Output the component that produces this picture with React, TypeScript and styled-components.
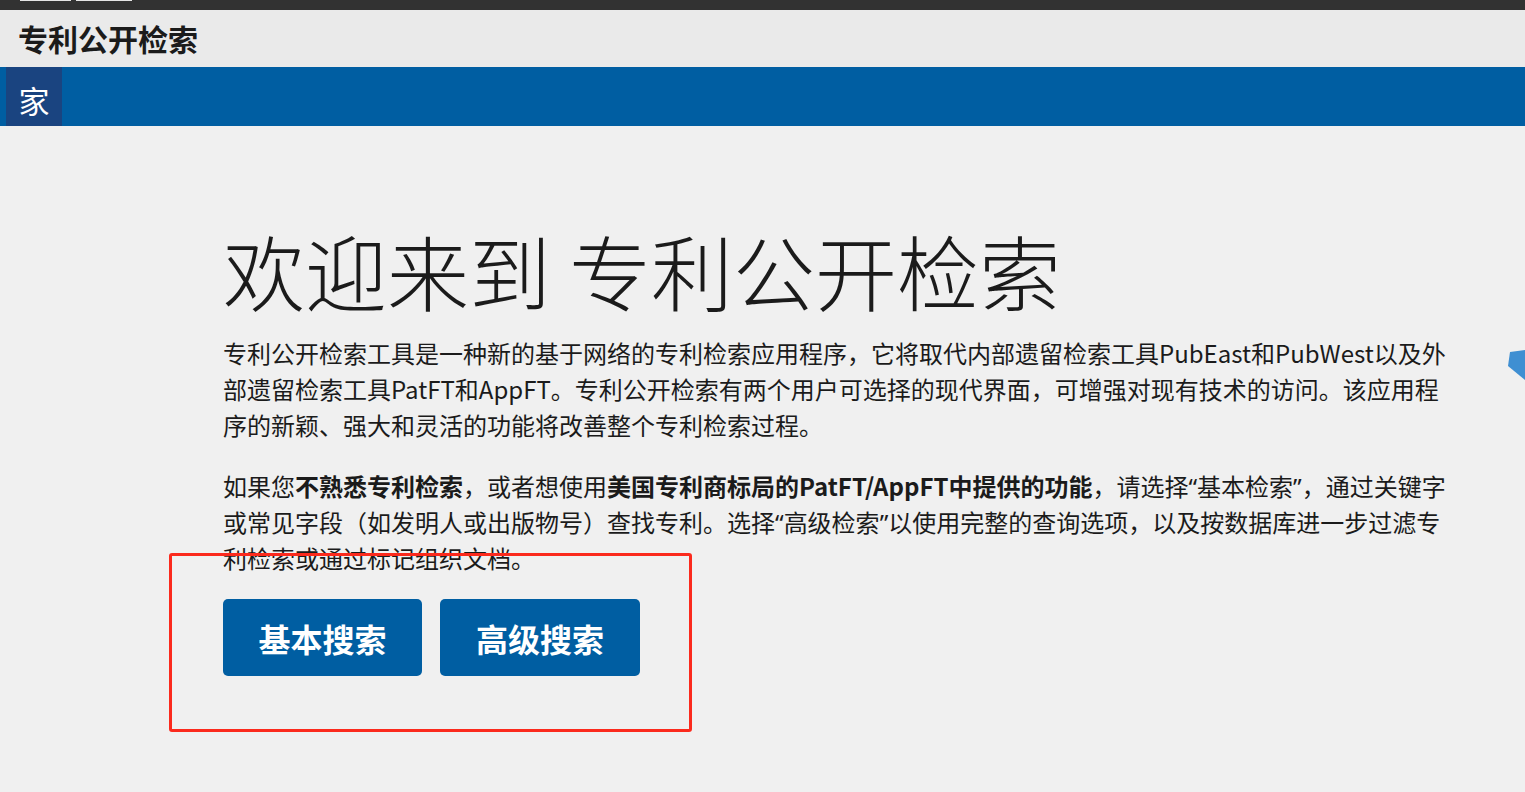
import styled, { createGlobalStyle } from "styled-components";

const GlobalStyle = createGlobalStyle`
  html, body {
    margin: 0;
    padding: 0;
    background: #f0f0f0;
    font-family: "Noto Sans CJK SC", "Noto Sans", sans-serif;
    color: #1b1b1b;
  }
`;

export default function App() {
  return (
    <Page>
      <GlobalStyle />
      <TopStrip>
        <StripTab $w={51} />
        <StripTab $w={56} />
      </TopStrip>
      <Header>
        <SiteTitle>专利公开检索</SiteTitle>
      </Header>
      <Nav>
        <NavTab>家</NavTab>
      </Nav>
      <Main>
        <Heading>欢迎来到 专利公开检索</Heading>
        <Para>
          专利公开检索工具是一种新的基于网络的专利检索应用程序，它将取代内部遗留检索工具PubEast和PubWest以及外部遗留检索工具PatFT和AppFT。专利公开检索有两个用户可选择的现代界面，可增强对现有技术的访问。该应用程序的新颖、强大和灵活的功能将改善整个专利检索过程。
        </Para>
        <Para>
          如果您<b>不熟悉专利检索</b>，或者想使用<b>美国专利商标局的PatFT/AppFT中提供的功能</b>，请选择<Quote>“</Quote>基本检索<Quote>”</Quote>，通过关键字或常见字段（如发明人或出版物号）查找专利。选择<Quote>“</Quote>高级检索<Quote>”</Quote>以使用完整的查询选项，以及按数据库进一步过滤专利检索或通过标记组织文档。
        </Para>
        <Buttons>
          <ActionButton $w={199}>基本搜索</ActionButton>
          <ActionButton $w={200}>高级搜索</ActionButton>
        </Buttons>
      </Main>
      <Highlight />
      <EdgeMarker viewBox="0 0 17 30">
        <polygon points="2,2 17,0 17,30 0,16" fill="#3f8fd2" />
      </EdgeMarker>
    </Page>
  );
}

const Page = styled("div")`
  position: relative;
  min-height: 792px;
  overflow: hidden;
`;

const TopStrip = styled("div")`
  height: 10px;
  background: #323232;
  display: flex;
  gap: 5px;
  padding-left: 20px;
`;

const StripTab = styled("div")<{ $w: number }>`
  width: ${(p) => p.$w}px;
  height: 1px;
  background: #e6e6e6;
`;

const Header = styled("header")`
  height: 57px;
  background: #eaeaea;
  display: flex;
  align-items: center;
  padding-left: 18px;
`;

const SiteTitle = styled("h1")`
  margin: 0;
  font-size: 30px;
  font-weight: 700;
  color: #1b1b1b;
  line-height: 1;
  margin-top: -2px;
`;

const Nav = styled("nav")`
  height: 59px;
  background: #005ea2;
  display: flex;
  padding-left: 6px;
`;

const NavTab = styled("a")`
  width: 56px;
  background: #1a4480;
  color: #fff;
  font-size: 31px;
  display: flex;
  align-items: center;
  justify-content: center;
  padding-top: 6px;
  box-sizing: border-box;
`;

const Main = styled("main")`
  padding: 96px 0 0 223px;
  width: 1236px;
`;

const Heading = styled("h2")`
  margin: 0 0 17px;
  font-size: 82px;
  font-weight: 300;
  line-height: 96px;
  color: #1b1b1b;
  white-space: nowrap;
`;

const Para = styled("p")`
  margin: 0 0 25px;
  font-size: 24px;
  line-height: 36px;
  b {
    font-weight: 700;
  }
`;

const Quote = styled("span")`
  font-family: "Noto Sans", sans-serif;
  line-height: 1;
`;

const Buttons = styled("div")`
  display: flex;
  gap: 18px;
  margin-top: -2px;
`;

const ActionButton = styled("button")<{ $w: number }>`
  width: ${(p) => p.$w}px;
  height: 77px;
  border: none;
  border-radius: 5px;
  background: #005ea2;
  color: #fff;
  font-family: "Noto Sans CJK SC", sans-serif;
  font-size: 32px;
  font-weight: 700;
  cursor: pointer;
`;

const Highlight = styled("div")`
  position: absolute;
  left: 169px;
  top: 553px;
  width: 523px;
  height: 179px;
  box-sizing: border-box;
  border: 3px solid #fb2a1d;
  border-radius: 3px;
  pointer-events: none;
`;

const EdgeMarker = styled("svg")`
  position: absolute;
  left: 1508px;
  top: 350px;
  width: 17px;
  height: 30px;
`;
